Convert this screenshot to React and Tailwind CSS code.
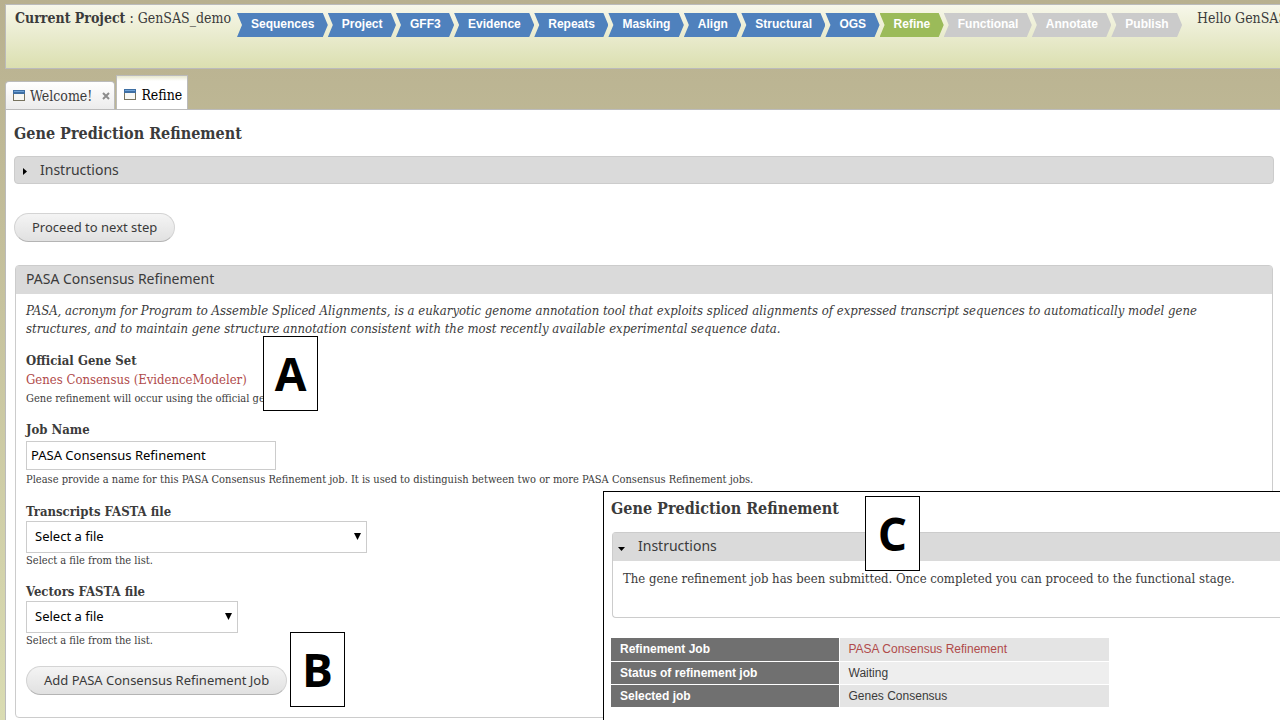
// src/App.jsx

import { useState } from "react";

const steps = [
  { label: "Sequences", state: "done" },
  { label: "Project", state: "done" },
  { label: "GFF3", state: "done" },
  { label: "Evidence", state: "done" },
  { label: "Repeats", state: "done" },
  { label: "Masking", state: "done" },
  { label: "Align", state: "done" },
  { label: "Structural", state: "done" },
  { label: "OGS", state: "done" },
  { label: "Refine", state: "current" },
  { label: "Functional", state: "pending" },
  { label: "Annotate", state: "pending" },
  { label: "Publish", state: "pending" },
];

const stepColors = {
  done: "bg-[#4f81bd]",
  current: "bg-[#9bbb59]",
  pending: "bg-[#cbcbcb]",
};

const jobRows = [
  { name: "Refinement Job", value: "PASA Consensus Refinement", link: true },
  { name: "Status of refinement job", value: "Waiting" },
  { name: "Selected job", value: "Genes Consensus" },
];

function WindowIcon() {
  return (
    <svg width="12" height="11" viewBox="0 0 12 11" className="shrink-0">
      <rect x="0.5" y="0.5" width="11" height="10" fill="#f8f8f4" stroke="#77735e" />
      <rect x="0" y="0" width="12" height="4" fill="#3f6fa3" />
      <rect x="1" y="1" width="10" height="1" fill="#6fa3d8" />
    </svg>
  );
}

function StepBar() {
  return (
    <nav className="flex w-[945px] shrink-0 font-['Liberation_Sans',Arial,sans-serif] text-xs font-bold text-white">
      {steps.map((step) => (
        <a
          key={step.label}
          href="#"
          className={`h-6 flex-auto pr-3 pl-[14px] leading-[22px] [clip-path:polygon(0_0,calc(100%-5px)_0,100%_50%,calc(100%-5px)_100%,0_100%,5px_50%)] ${stepColors[step.state]}`}
        >
          {step.label}
        </a>
      ))}
    </nav>
  );
}

function PillButton({ children }) {
  return (
    <button
      type="button"
      className="block h-[29px] rounded-full border border-[#d4d4d4] border-b-[#b4b4b4] bg-linear-to-b from-[#f4f4f4] to-[#e1e1e1] px-[17px] pb-[2px] font-['Noto_Sans',sans-serif] text-[13px] leading-6 text-[#3a3a3a]"
    >
      {children}
    </button>
  );
}

function FileSelect({ id, label, width }) {
  return (
    <div className="mt-[14px]">
      <label htmlFor={id} className="block leading-[18px] font-bold">
        {label}
      </label>
      <div className={`relative ${width}`}>
        <select
          id={id}
          className="block h-8 w-full appearance-none border border-[#ccc] bg-white px-2 font-['Noto_Sans',sans-serif] text-[13px] text-black"
        >
          <option>Select a file</option>
        </select>
        <svg
          width="7"
          height="7"
          viewBox="0 0 7 7"
          className="pointer-events-none absolute top-3 right-[6px]"
        >
          <path d="M0 0h7L3.5 7z" fill="#000" />
        </svg>
      </div>
      <p className="text-[11px] leading-4">Select a file from the list.</p>
    </div>
  );
}

function Marker({ letter, place }) {
  return (
    <div
      className={`absolute flex h-[75px] w-[55px] items-center justify-center border border-black bg-white font-['Open_Sans',sans-serif] text-[46px] font-bold text-black ${place}`}
    >
      {letter}
    </div>
  );
}

function ResultPanel() {
  return (
    <section className="absolute top-[491px] right-0 bottom-0 left-[603px] overflow-hidden border-t border-l border-black bg-white pl-[7px]">
      <h2 className="mt-[7px] text-base leading-5 font-bold">Gene Prediction Refinement</h2>
      <div className="mt-[13px] ml-px rounded-tl rounded-bl border border-r-0 border-[#ccc]">
        <button
          type="button"
          className="flex h-7 w-full items-center bg-[#dadada] pb-[2px] pl-[5px] text-left font-['Noto_Sans',sans-serif] text-sm"
        >
          <svg width="7" height="4" viewBox="0 0 7 4" className="mt-[6px] mr-[13px]">
            <path d="M0 0h7L3.5 4z" fill="#000" />
          </svg>
          Instructions
        </button>
        <p className="h-14 px-[10px] pt-[9px] leading-[18px]">
          The gene refinement job has been submitted. Once completed you can proceed to the
          functional stage.
        </p>
      </div>
      <table className="mt-5 w-[498px] border-collapse font-['Liberation_Sans',Arial,sans-serif] text-xs">
        <tbody>
          {jobRows.map((row) => (
            <tr key={row.name} className="h-[23px] border-b border-white odd:bg-[#e4e4e4] even:bg-[#eee]">
              <th className="w-[228px] border-r border-white bg-[#707070] pl-[9px] text-left font-bold text-white">
                {row.name}
              </th>
              <td className="pl-[9px]">
                {row.link ? (
                  <a href="#" className="text-[#b04a4a]">
                    {row.value}
                  </a>
                ) : (
                  row.value
                )}
              </td>
            </tr>
          ))}
        </tbody>
      </table>
    </section>
  );
}

export default function App() {
  const [jobName, setJobName] = useState("PASA Consensus Refinement");

  return (
    <div className="relative flex min-h-screen flex-col overflow-hidden bg-linear-to-b from-[#b8b08f] to-[#dadcb2] pt-1 pl-[5px] font-['DejaVu_Serif_Condensed','Liberation_Serif',serif] text-[13px] text-[#3b3b3b]">
      <header className="flex h-[65px] items-start overflow-hidden border border-r-0 border-[#bbb] bg-linear-to-b from-[#f7f7ea] to-[#dbdfb0] text-sm whitespace-nowrap">
        <p className="mt-1 ml-[9px] w-[222px] shrink-0 leading-[18px]">
          <strong>Current Project</strong> : GenSAS_demo
        </p>
        <div className="mt-2">
          <StepBar />
        </div>
        <p className="mt-1 ml-[15px] leading-[18px]">Hello GenSAS</p>
      </header>

      <div className="mt-[6px] flex items-end text-sm leading-[18px]">
        <div className="flex h-7 items-center rounded-t-sm border border-b-0 border-[#bbb] bg-linear-to-b from-white to-[#ececec] pr-1 pl-[7px]">
          <WindowIcon />
          <a href="#" className="ml-[5px]">
            Welcome!
          </a>
          <button type="button" aria-label="Close tab" className="ml-[10px]">
            <svg width="8" height="8" viewBox="0 0 8 8">
              <path d="M1 1l6 6M7 1l-6 6" stroke="#8c8c8c" strokeWidth="2" />
            </svg>
          </button>
        </div>
        <div className="ml-px flex h-[34px] items-center border border-b-0 border-[#bbb] bg-linear-to-b from-[#e6e6cc] to-white to-15% pt-1 pr-[5px] pl-[7px] text-black">
          <WindowIcon />
          <a href="#" className="ml-[5px]">
            Refine
          </a>
        </div>
      </div>

      <main className="flex-1 border-t border-l border-[#bbb] bg-white pr-[6px] pb-[2px] pl-2">
        <h1 className="mt-[14px] text-base leading-5 font-bold">Gene Prediction Refinement</h1>
        <button
          type="button"
          className="mt-3 flex h-7 w-full items-center rounded border border-[#ccc] bg-[#dadada] pl-2 text-left font-['Noto_Sans',sans-serif] text-sm leading-[26px]"
        >
          <svg width="4" height="7" viewBox="0 0 4 7" className="mt-[2px] mr-[13px]">
            <path d="M0 0v7L4 3.500z" fill="#000" />
          </svg>
          Instructions
        </button>

        <div className="mt-[29px]">
          <PillButton>Proceed to next step</PillButton>
        </div>

        <section className="mt-[23px] mr-px ml-px rounded border border-[#ccc]">
          <h2 className="h-7 bg-[#dadada] pl-[10px] font-['Noto_Sans',sans-serif] text-sm leading-[26px]">
            PASA Consensus Refinement
          </h2>
          <form className="px-[10px] pt-2 pb-[22px]">
            <p className="pr-6 leading-[18px] italic">
              PASA, acronym for Program to Assemble Spliced Alignments, is a eukaryotic genome
              annotation tool that exploits spliced alignments of expressed transcript sequences to
              automatically model gene structures, and to maintain gene structure annotation
              consistent with the most recently available experimental sequence data.
            </p>

            <div className="mt-[14px]">
              <h3 className="leading-[18px] font-bold">Official Gene Set</h3>
              <a href="#" className="block leading-5 text-[#b04a4a]">
                Genes Consensus (EvidenceModeler)
              </a>
              <p className="text-[11px] leading-[18px]">
                Gene refinement will occur using the official ge
              </p>
            </div>

            <div className="mt-[13px]">
              <label htmlFor="job-name" className="block leading-[18px] font-bold">
                Job Name
              </label>
              <input
                id="job-name"
                type="text"
                value={jobName}
                onChange={(e) => setJobName(e.target.value)}
                className="mt-[2px] block h-[29px] w-[250px] border border-[#ccc] bg-white px-1 pb-[2px] font-['Noto_Sans',sans-serif] text-[13px] text-black"
              />
              <p className="mt-px text-[11px] leading-[18px]">
                Please provide a name for this PASA Consensus Refinement job. It is used to
                distinguish between two or more PASA Consensus Refinement jobs.
              </p>
            </div>

            <FileSelect id="transcripts-file" label="Transcripts FASTA file" width="w-[341px]" />
            <FileSelect id="vectors-file" label="Vectors FASTA file" width="w-[212px]" />

            <div className="mt-[17px]">
              <PillButton>Add PASA Consensus Refinement Job</PillButton>
            </div>
          </form>
        </section>
      </main>

      <ResultPanel />
      <Marker letter="A" place="left-[263px] top-[336px]" />
      <Marker letter="B" place="left-[290px] top-[632px]" />
      <Marker letter="C" place="left-[865px] top-[496px]" />
    </div>
  );
}
